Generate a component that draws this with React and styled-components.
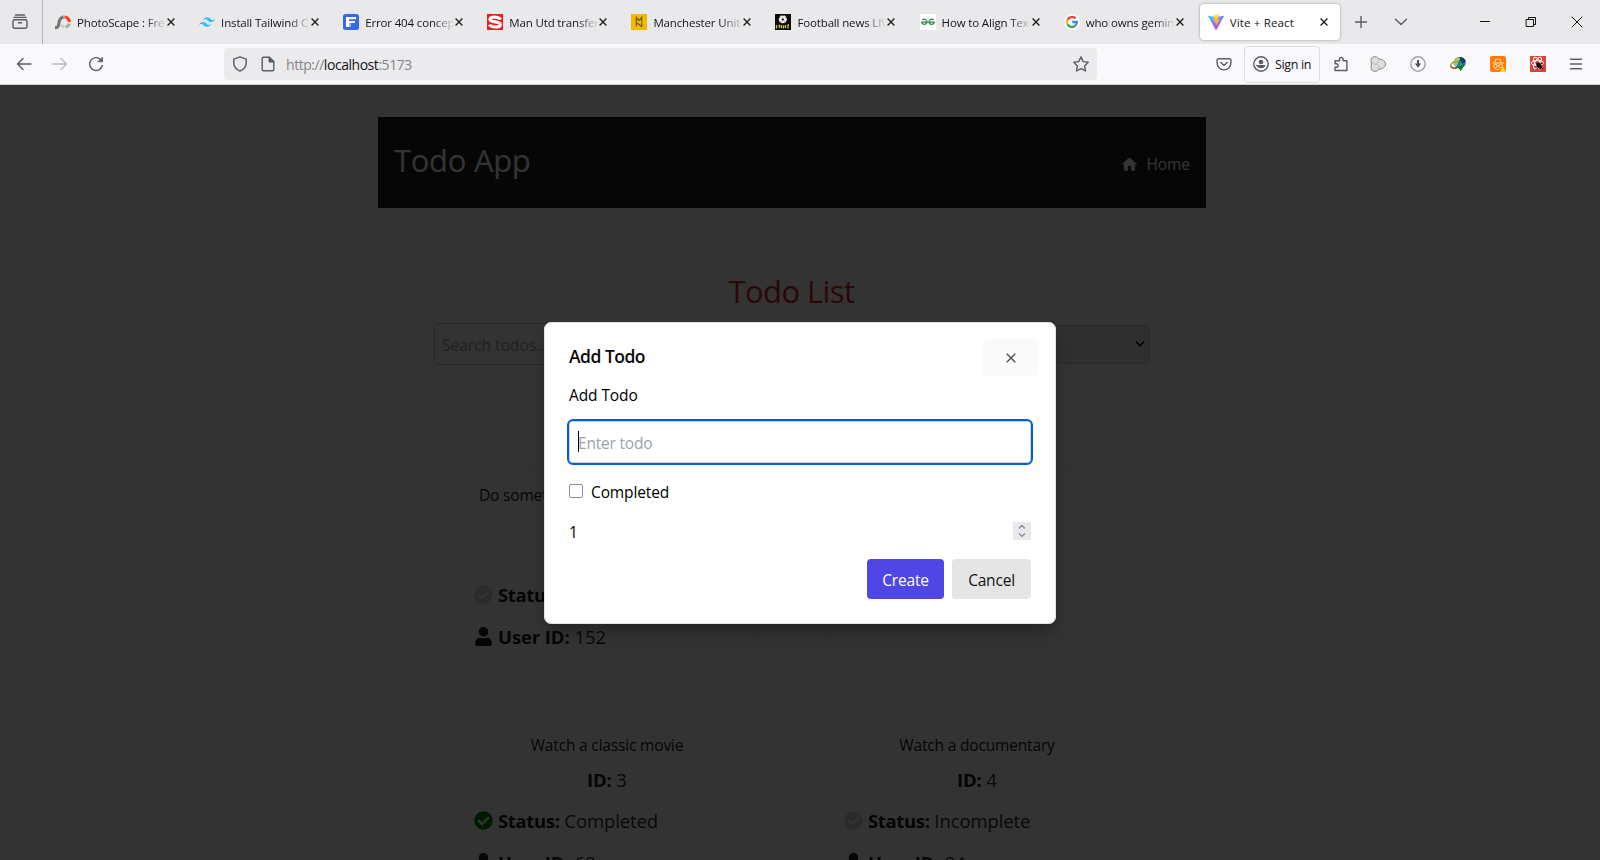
import React from "react";
import styled, { createGlobalStyle } from "styled-components";
import { FaUser, FaCheckCircle } from "react-icons/fa";
import { MdHome } from "react-icons/md";

const GlobalStyle = createGlobalStyle`
  * { box-sizing: border-box; }
  body {
    margin: 0;
    overflow: hidden;
    font-family: "Open Sans", "Noto Sans", sans-serif;
    font-size: 15.5px;
    color: #000;
  }
  svg { display: block; flex: none; }
  button, input { font: inherit; }
`;

const Window = styled.div`
  width: 1600px;
  height: 860px;
  display: flex;
  flex-direction: column;
  overflow: hidden;
`;

/* ---------- browser chrome ---------- */

const TabStrip = styled.div`
  height: 44px;
  flex: none;
  display: flex;
  background: #e9e9eb;
`;

const ViewButton = styled.div`
  width: 43px;
  flex: none;
  padding: 0 0 0 12px;
  display: flex;
  align-items: center;
  border-right: 1px solid #b3b3b5;
`;

const Tab = styled.div`
  width: ${(p) => (p.$active ? 140 : 144.1)}px;
  height: ${(p) => (p.$active ? 36 : 44)}px;
  margin: ${(p) => (p.$active ? "4px 0 0 4px" : "0")};
  padding-left: ${(p) => (p.$active ? 8 : 12)}px;
  flex: none;
  display: flex;
  align-items: center;
  background: ${(p) => (p.$active ? "#fff" : "transparent")};
  border-radius: 4px;
  box-shadow: ${(p) => (p.$active ? "0 0 3px rgba(0,0,0,.35)" : "none")};
`;

const TabTitle = styled.span`
  width: 88px;
  margin-left: 6px;
  overflow: hidden;
  white-space: nowrap;
  font-size: 11.5px;
  line-height: 18px;
  padding-top: 1px;
  letter-spacing: ${(p) => (p.$active ? 0.15 : -0.15)}px;
  color: #15141a;
  mask-image: ${(p) =>
    p.$active ? "none" : "linear-gradient(to right, #000 68px, transparent 90px)"};
`;

const TabClose = styled.span`
  margin-left: 2px;
`;

const TabActions = styled.div`
  display: flex;
  align-items: center;
  margin-left: 13px;
  gap: 24px;
`;

const WindowControls = styled.div`
  display: flex;
  align-items: center;
  gap: 30px;
  margin-left: auto;
  padding-right: 15px;
`;

const Toolbar = styled.div`
  height: 41px;
  flex: none;
  display: flex;
  align-items: center;
  background: #f9f9fb;
  border-bottom: 1px solid #cfcfd0;
`;

const NavButtons = styled.div`
  width: 224px;
  flex: none;
  padding-left: 16px;
  display: flex;
  gap: 20px;
`;

const UrlBar = styled.div`
  width: 873px;
  flex: none;
  height: 32px;
  padding: 0 8px;
  display: flex;
  align-items: center;
  background: #ebebed;
  border-radius: 4px;
`;

const UrlText = styled.span`
  flex: 1;
  margin-left: 10px;
  font-size: 14px;
  line-height: 20px;
  padding-top: 2px;
  letter-spacing: -0.46px;
  color: #858587;
  b { font-weight: 400; color: #15141a; }
`;

const UrlIcon = styled.span`
  margin-left: ${(p) => p.$gap || 0}px;
`;

const ToolItems = styled.div`
  flex: 1;
  padding-left: 107px;
  display: flex;
  align-items: center;
`;

const ToolCell = styled.span`
  width: ${(p) => p.$w || 40}px;
  flex: none;
  display: flex;
  justify-content: center;
`;

const SignIn = styled.div`
  width: 76px;
  flex: none;
  height: 37px;
  margin: 0 4px 0 0;
  display: flex;
  align-items: center;
  gap: 6px;
  padding-left: 8px;
  border: 1px solid #dedee1;
  border-radius: 4px;
  font-size: 12.5px;
  letter-spacing: -0.36px;
  color: #15141a;
  white-space: nowrap;
`;

/* ---------- page ---------- */

const Viewport = styled.div`
  flex: 1;
  position: relative;
  overflow: hidden;
  background: #fff;
`;

const Page = styled.div`
  width: 828px;
  margin-left: 378px;
  padding-top: 32px;
`;

const Header = styled.header`
  height: 91px;
  padding: 0 16px;
  display: flex;
  justify-content: space-between;
  align-items: center;
  color: #fff;
  background: repeating-linear-gradient(45deg, #161616 0, #161616 1.4px, #272727 1.4px, #272727 2.8px);
`;

const Brand = styled.h1`
  margin: 0 0 6px;
  font-size: 31px;
  line-height: 40px;
  font-weight: 400;
  letter-spacing: -0.3px;
`;

const HomeLink = styled.a`
  display: flex;
  align-items: center;
  gap: 7px;
  line-height: 24px;
  margin-top: 3px;
  letter-spacing: -0.05px;
`;

const Panel = styled.main`
  width: 768px;
  height: 700px;
  margin: 36px 0 0 31px;
  padding: 24px;
  border: 1px solid #f8f8f8;
  border-radius: 8px;
`;

const PanelTitle = styled.h2`
  margin: 2px 0 12px;
  text-align: center;
  font-size: 31px;
  line-height: 40px;
  font-weight: 400;
  letter-spacing: -0.6px;
  padding-right: 3px;
  color: #dc2626;
`;

const Filters = styled.div`
  display: flex;
  justify-content: space-between;
  align-items: center;
  padding-right: 2px;
`;

const SearchBox = styled.div`
  width: 300px;
  height: 42px;
  padding: 0 7px;
  line-height: 43px;
  border: 1px solid #c8c8c8;
  border-radius: 4px;
  letter-spacing: 0;
  color: #9ca3af;
`;

const SelectBox = styled.div`
  width: 180px;
  height: 39px;
  padding-right: 4px;
  display: flex;
  justify-content: flex-end;
  align-items: center;
  background: #e9e9ed;
  border: 1px solid #d0d0d0;
  border-radius: 4px;
`;

const Grid = styled.div`
  display: grid;
  grid-template-columns: 300px 300px;
  column-gap: 70px;
  row-gap: 40px;
  padding: 100px 0 0 23px;
`;

const Card = styled.article`
  height: 210px;
  padding: 17px 16px;
  border: 1px solid #f2f2f2;
  border-radius: 8px;
`;

const CardTitle = styled.h3`
  margin: 0 0 9px;
  text-align: center;
  font-size: 15.5px;
  line-height: 24px;
  font-weight: 400;
  letter-spacing: -0.17px;
  color: #1a1a1a;
`;

const CardId = styled.p`
  margin: 0 0 13px;
  text-align: center;
  font-size: 18.5px;
  line-height: 28px;
  color: #303030;
  b { color: #1a1a1a; letter-spacing: -0.2px; }
`;

const CardRow = styled.p`
  margin: 0 0 14px;
  display: flex;
  align-items: center;
  gap: 5px;
  font-size: 18.5px;
  line-height: 28px;
  letter-spacing: ${(p) => (p.$icon ? -0.1 : 0)}px;
  color: #303030;
  svg { width: 19px; height: 19px; margin-top: -1px; color: ${(p) => p.$icon || "#1a1a1a"}; }
  b { color: #1a1a1a; letter-spacing: ${(p) => (p.$icon ? -0.35 : -0.1)}px; }
`;

/* ---------- dialog ---------- */

const Overlay = styled.div`
  position: absolute;
  inset: 0;
  display: flex;
  align-items: center;
  justify-content: center;
  background: rgba(0, 0, 0, 0.8);
`;

const Dialog = styled.section`
  width: 512px;
  height: 302px;
  padding: 16px 24px 24px;
  background: #fff;
  border: 1px solid #e4e4e7;
  border-radius: 7px;
  box-shadow: 0 10px 15px -3px rgba(0, 0, 0, 0.3);
`;

const DialogHead = styled.div`
  height: 37px;
  display: flex;
  justify-content: space-between;
  margin-right: -8px;
`;

const DialogTitle = styled.h2`
  margin: 3px 0 0;
  font-size: 17.5px;
  line-height: 28px;
  font-weight: 600;
  letter-spacing: -0.5px;
  color: #09090b;
`;

const CloseButton = styled.button`
  width: 56px;
  flex: none;
  height: 37px;
  padding: 1px 0 0;
  display: flex;
  align-items: center;
  justify-content: center;
  border: 0;
  border-radius: 4px;
  background: #fafafa;
`;

const Label = styled.div`
  margin-top: 6px;
  padding-top: 1px;
  height: 24px;
  line-height: 24px;
  letter-spacing: -0.1px;
`;

const Field = styled.div`
  height: 46px;
  margin: 13px -2px 0;
  padding: 2px 8px 0;
  display: flex;
  align-items: center;
  border: 2px solid #0060df;
  border-radius: 6px;
  box-shadow: inset 0 0 0 1px #cfcfcf;
  letter-spacing: -0.2px;
  color: #9ca3af;
`;

const Caret = styled.span`
  width: 1px;
  height: 21px;
  margin: 0 -1px 2px 1px;
  background: #000;
`;

const CheckRow = styled.div`
  display: flex;
  align-items: center;
  gap: 8px;
  margin-top: 15px;
  height: 24px;
`;

const CheckBox = styled.span`
  width: 14px;
  height: 14px;
  margin-top: -2px;
  border: 1px solid #8f8f9d;
  border-radius: 2px;
`;

const CheckLabel = styled.span`
  padding-top: 1px;
  letter-spacing: -0.12px;
`;

const NumberRow = styled.div`
  display: flex;
  justify-content: space-between;
  align-items: center;
  height: 24px;
  margin-top: 15px;
`;

const NumberValue = styled.span`
  padding-top: 3px;
`;

const Stepper = styled.span`
  width: 18px;
  height: 18px;
  display: flex;
  align-items: center;
  justify-content: center;
  background: #e9e9ed;
`;

const Actions = styled.div`
  display: flex;
  justify-content: flex-end;
  gap: 8px;
  margin-top: 16px;
`;

const ActionButton = styled.button`
  width: ${(p) => (p.$primary ? 77 : 79)}px;
  height: 40px;
  padding: 2px 0 0;
  border: 0;
  border-radius: 4px;
  color: ${(p) => (p.$primary ? "#fff" : "#111")};
  background: ${(p) => (p.$primary ? "#4f46e5" : "#e5e5e5")};
  letter-spacing: -0.2px;
`;

/* ---------- icons ---------- */

const Line = ({ size = 16, color = "#5b5b66", w = 1.4, children }) => (
  <svg width={size} height={size} viewBox="0 0 16 16" fill="none" stroke={color} strokeWidth={w} strokeLinecap="round" strokeLinejoin="round">
    {children}
  </svg>
);

const Cross = ({ size = 8, color = "#222", w = 1.4 }) => (
  <svg width={size} height={size} viewBox="0 0 8 8" stroke={color} strokeWidth={w}>
    <path d="M.6.6 7.4 7.4M7.4.6.6 7.4" />
  </svg>
);

const favicons = {
  photoscape: (
    <svg width="16" height="16" viewBox="0 0 16 16" fill="none">
      <path d="M0 13.600c3.500.2 3.500-2 4-5C4.600 5.500 5.500 3.600 8.600 2.800" stroke="#777" strokeWidth="3.200" />
      <path d="M9.500 3a5.200 5.200 0 0 1 4.800 5" stroke="#ff3d18" strokeWidth="3.200" />
      <path d="M14.300 9.500a5 5 0 0 1-3.500 3.600" stroke="#aaa" strokeWidth="3" />
      <path d="M9.500 13.300a5 5 0 0 1-3-2.500" stroke="#c9c9c9" strokeWidth="2.600" />
    </svg>
  ),
  tailwind: (
    <svg width="16" height="16" viewBox="0 0 16 16" fill="#38bdf8">
      <path d="M4 6.400C4.530 4.270 5.870 3.200 8 3.200c3.200 0 3.600 2.400 5.200 2.800 1.070.27 2-.13 2.800-1.200-.53 2.130-1.870 3.200-4 3.200-3.200 0-3.600-2.400-5.200-2.800-1.070-.27-2 .13-2.800 1.200zM0 11.200C.53 9.070 1.870 8 4 8c3.200 0 3.600 2.400 5.200 2.800 1.070.27 2-.13 2.800-1.200-.53 2.130-1.870 3.200-4 3.200-3.200 0-3.600-2.400-5.200-2.800-1.070-.27-2 .13-2.800 1.200z" />
    </svg>
  ),
  freepik: (
    <svg width="16" height="16" viewBox="0 0 16 16">
      <rect width="16" height="16" rx="2.500" fill="#336aea" />
      <path d="M3 3h3v10H3zM6 3h7v2.200H6zM6 7h6v2H6z" fill="#fff" />
      <path d="M6 9h2v4H6z" fill="#9bb6f5" />
    </svg>
  ),
  sun: (
    <svg width="16" height="16" viewBox="0 0 16 16">
      <rect width="16" height="16" fill="#eb1e23" />
      <path d="M13.400 5.600C12.600 2.800 3 1.700 3 5.200c0 3.500 10.300 2 10.300 5.300 0 3.600-9.500 3-10.800.2" fill="none" stroke="#fff" strokeWidth="3.200" />
    </svg>
  ),
  men: (
    <svg width="16" height="16" viewBox="0 0 16 16">
      <rect width="16" height="16" fill="#f1b900" />
      <path d="M5.300 7.500V3.500l2.700 3 2.700-3v4M5.300 12.500v-4l5.400 4v-4" fill="none" stroke="#7a5f10" strokeWidth="1.300" />
    </svg>
  ),
  talksport: (
    <svg width="16" height="16" viewBox="0 0 16 16">
      <rect width="16" height="16" fill="#0b0b0b" />
      <circle cx="7.800" cy="5.300" r="4" fill="#eee" />
      <path d="m7.800 4.200 1.200.9-.4 1.400H7l-.4-1.400z" fill="#111" />
      <path d="M4.300 3.800l1-1M11.300 3.800l-1-1M5.300 8.600l.5-1M10.300 8.600l-.5-1M7.200 1.600h1.200" stroke="#111" />
      <path d="M1.500 11v3.500M3.500 11.500h1v2.500M6.500 11v3M8.500 11.500v3M10.500 11v3M12.500 11h1.500M13 11v3.500" stroke="#d6cf13" strokeWidth="1.300" />
    </svg>
  ),
  geeks: (
    <svg width="16" height="16" viewBox="0 0 16 16">
      <rect width="16" height="16" fill="#fff" />
      <path d="M2.200 5.800C4.500 4.500 7 5.600 6.800 8c-.2 3-4.600 3-5 .2h12.400c-.4 2.800-4.800 2.800-5-.2-.2-2.400 2.300-3.500 4.600-2.200" fill="none" stroke="#2f8d46" strokeWidth="1.300" />
    </svg>
  ),
  google: (
    <svg width="16" height="16" viewBox="0 0 16 16">
      <circle cx="8" cy="8" r="8" fill="#fff" />
      <g fill="none" strokeWidth="2.300">
        <path d="M11.600 4.500A5 5 0 0 0 3.500 5.800" stroke="#ea4335" />
        <path d="M3.500 5.800a5 5 0 0 0 0 4.400" stroke="#fbbc05" />
        <path d="M3.500 10.200a5 5 0 0 0 7.800 1.500" stroke="#34a853" />
        <path d="M11.300 11.700A5 5 0 0 0 12.900 8H8.200" stroke="#4285f4" />
      </g>
    </svg>
  ),
  vite: (
    <svg width="16" height="16" viewBox="0 0 16 16">
      <defs>
        <linearGradient id="va" x1="0" y1="0" x2="0.600" y2="1">
          <stop stopColor="#41d1ff" />
          <stop offset="1" stopColor="#bd34fe" />
        </linearGradient>
        <linearGradient id="vb" x1="0" y1="0" x2="0" y2="1">
          <stop stopColor="#ffea83" />
          <stop offset=".3" stopColor="#ffc72a" />
          <stop offset="1" stopColor="#ffa800" />
        </linearGradient>
      </defs>
      <path d="M15.900 2.400 8.400 15.700c-.2.300-.6.300-.7 0L.1 2.400c-.2-.3.100-.7.400-.600L8 3.100l7.400-1.300c.4-.1.700.3.500.600z" fill="url(#va)" />
      <path d="m11.500 0-5.600 1.100-.5 6 1.900-.3-.5 2.400 1.300-.3-.5 3.300 4.200-6.700-2.100.3z" fill="url(#vb)" />
    </svg>
  ),
};

const tabs = [
  { icon: "photoscape", title: "PhotoScape : Free" },
  { icon: "tailwind", title: "Install Tailwind CSS" },
  { icon: "freepik", title: "Error 404 concept" },
  { icon: "sun", title: "Man Utd transfer" },
  { icon: "men", title: "Manchester United" },
  { icon: "talksport", title: "Football news LIVE" },
  { icon: "geeks", title: "How to Align Text" },
  { icon: "google", title: "who owns gemini" },
  { icon: "vite", title: "Vite + React", active: true },
];

const todos = [
  { title: "Do something nice for someone you care about", id: 1, done: false, user: 152 },
  { title: "Memorize a poem", id: 2, done: true, user: 13 },
  { title: "Watch a classic movie", id: 3, done: true, user: 68 },
  { title: "Watch a documentary", id: 4, done: false, user: 84 },
];

function BrowserChrome() {
  return (
    <>
      <TabStrip>
        <ViewButton>
          <Line><path d="M3.500 1h9M2 3.400h12M2.600 5.800h10.800c.8 0 1.600.6 1.600 1.600v5.200c0 1-.7 1.700-1.700 1.700H2.700c-1 0-1.700-.7-1.700-1.700V7.400c0-1 .8-1.600 1.600-1.600zM6.500 8.800h3" /></Line>
        </ViewButton>
        {tabs.map((t) => (
          <Tab key={t.title} $active={t.active}>
            {favicons[t.icon]}
            <TabTitle $active={t.active}>{t.title}</TabTitle>
            <TabClose><Cross /></TabClose>
          </Tab>
        ))}
        <TabActions>
          <Line><path d="M8 2.500v11M2.500 8h11" /></Line>
          <Line><path d="m2.500 5.300 5.500 5.200 5.500-5.200" /></Line>
        </TabActions>
        <WindowControls>
          <Line color="#111" w={1}><path d="M3 7.500h10" strokeLinecap="butt" /></Line>
          <Line color="#111" w={1}><path d="M3.500 5.500h7v7h-7zM5.500 5.500v-2h7v7h-2" strokeLinejoin="miter" /></Line>
          <Line color="#111" w={1}><path d="m3 3 10 10M13 3 3 13" /></Line>
        </WindowControls>
      </TabStrip>
      <Toolbar>
        <NavButtons>
          <Line><path d="M15 8H1.500M7 2.500 1.500 8 7 13.500" /></Line>
          <Line color="#b9b9be"><path d="M1 8h13.500M9 2.500 14.500 8 9 13.500" /></Line>
          <Line><path d="M14.300 9.500A6.400 6.400 0 1 1 12.600 3.500" /><path d="M14.500 1.500v4.300h-4.300z" fill="#5b5b66" strokeWidth=".8" /></Line>
        </NavButtons>
        <UrlBar>
          <Line><path d="M8 .8 1.800 3.200v3.600c0 4 2.400 6.800 6.200 8.400 3.800-1.600 6.200-4.400 6.200-8.400V3.200z" /></Line>
          <UrlIcon $gap={12}>
            <Line><path d="M3.500 1.200h5.700l4.600 4.500v7.800c0 .8-.5 1.300-1.300 1.300h-9c-.8 0-1.300-.5-1.300-1.300v-11c0-.8.5-1.300 1.300-1.300z" /><path d="M9.200 1.200v4.500h4.600z" fill="#5b5b66" /></Line>
          </UrlIcon>
          <UrlText>http://<b>localhost</b>:5173</UrlText>
          <Line><path d="m8 .9 2.200 4.700 5 .7-3.600 3.600.9 5.100L8 12.600 3.500 15l.9-5.100L.8 6.300l5-.7z" /></Line>
        </UrlBar>
        <ToolItems>
          <ToolCell>
            <Line><path d="M2.500 2.700h11c.8 0 1.400.6 1.400 1.400V7A6.900 6.900 0 0 1 1.100 7V4.100c0-.8.6-1.400 1.400-1.400zM4.800 6.500 8 9.600l3.200-3.100" /></Line>
          </ToolCell>
          <SignIn>
            <Line><circle cx="8" cy="8" r="7.200" /><circle cx="8" cy="6" r="2.300" fill="#5b5b66" stroke="none" /><path d="M3.800 9.600h8.400a5 5 0 0 1-8.400 0z" fill="#5b5b66" strokeWidth="1" /></Line>
            Sign in
          </SignIn>
          <ToolCell $w={34}>
            <Line><path d="M2 7V4.700h4.500V3.200a1.800 1.800 0 0 1 3.600 0v1.500h3.800v9.800H2v-3.200h1.300a1.800 1.800 0 0 0 0-3.600H2" /></Line>
          </ToolCell>
          <ToolCell>
            <svg width="16" height="16" viewBox="0 0 16 16" fill="#dedede" stroke="#858585" strokeWidth="1">
              <path d="M1 4.500C.6 2 3 .5 5.200.7c2 0 3 1 3.500 2.300 3.300 0 6.800 2 6.800 5s-3 5.300-6.500 5c-.7 1.600-2 2.300-4 2.300C2.500 15.300.8 13.500 1 11.500 1.500 9.500 1.500 6.500 1 4.500z" />
              <path d="M8.700 3C9 5 8 7.800 5 8.200c3 .3 4.300 2.500 4 4.800M5 8.200C3 8 2 6.500 1 4.500" stroke="#bdbdbd" fill="none" />
            </svg>
          </ToolCell>
          <ToolCell>
            <svg width="16" height="16" viewBox="0 0 16 16" fill="none">
              <circle cx="8" cy="8" r="7.200" stroke="#a4a4a8" strokeWidth="1.500" />
              <path d="M8 4v4" stroke="#4d4d55" strokeWidth="2" />
              <path d="M4.900 7.600h6.200L8 11.800z" fill="#4d4d55" />
            </svg>
          </ToolCell>
          <ToolCell>
            <svg width="16" height="16" viewBox="0 0 16 16">
              <ellipse cx="9.800" cy="6.500" rx="6" ry="5.500" fill="#2276bd" />
              <path d="M9 1.200c3-.5 5.800 1.300 6.700 4L12.500 8 9 6z" fill="#153f74" />
              <path d="M5.500 2.700c2-1.800 4.500-1.300 4.500.2S7.500 6.500 7.300 8.800 3.800 9.500 3.800 7z" fill="#9ad06b" />
              <ellipse cx="6" cy="8.800" rx="5.600" ry="3" fill="none" stroke="#59a62c" strokeWidth="1.300" transform="rotate(-15 6 8.800)" />
              <path d="M.6 9.200C1.800 6 4.500 4.600 7.500 4.800" stroke="#e0b22b" strokeWidth="1.300" fill="none" />
              <path d="M1 10.500c1.500 2 4 2 6 1.300" stroke="#c2482a" strokeWidth="1.300" fill="none" />
              <path d="M6.500 11.500 14.500 8 13 11.500l-2.500 3.700-1-2.200z" fill="#087b18" />
            </svg>
          </ToolCell>
          <ToolCell>
            <svg width="16" height="16" viewBox="0 0 16 16" fill="none">
              <rect width="16" height="16" rx="2.500" fill="#ff7a00" />
              <path d="M2.300 7h11.400M4.800 6.500 5.600 3.300h4.800l.8 3.200" stroke="#ffe4c7" />
              <circle cx="5.300" cy="10" r="1.800" stroke="#ffe4c7" strokeWidth=".9" />
              <circle cx="10.700" cy="10" r="1.800" stroke="#ffe4c7" strokeWidth=".9" />
              <path d="M7 9.800h2M4.500 12.500c1.500 1.200 3.500 1.300 5 .5" stroke="#ffe4c7" strokeWidth=".9" />
              <path d="m13 10.500 3 5.500h-6z" fill="#ffe21c" />
            </svg>
          </ToolCell>
          <ToolCell>
            <svg width="16" height="16" viewBox="0 0 16 16" fill="none">
              <rect width="16" height="16" fill="#d9453a" />
              <g stroke="#fff" strokeWidth="1">
                <ellipse cx="7.500" cy="7" rx="6.300" ry="2.500" />
                <ellipse cx="7.500" cy="7" rx="6.300" ry="2.500" transform="rotate(60 7.500 7)" />
                <ellipse cx="7.500" cy="7" rx="6.300" ry="2.500" transform="rotate(120 7.500 7)" />
              </g>
              <ellipse cx="9.300" cy="9.800" rx="2.200" ry="3.600" fill="#16100f" transform="rotate(-40 9.300 9.800)" />
              <path d="m6.500 9.500 1 4M9.500 7l4 1M7 7.500l-1.500-1M11.500 12l2 1" stroke="#16100f" strokeWidth=".8" />
            </svg>
          </ToolCell>
          <ToolCell $w={36}>
            <Line><path d="M2.500 3.300h11M2.500 8h11M2.500 12.700h11" /></Line>
          </ToolCell>
        </ToolItems>
      </Toolbar>
    </>
  );
}

function TodoCard({ todo }) {
  return (
    <Card>
      <CardTitle>{todo.title}</CardTitle>
      <CardId><b>ID:</b> {todo.id}</CardId>
      <CardRow $icon={todo.done ? "#008000" : "#d4d4d4"}>
        <FaCheckCircle />
        <span><b>Status:</b> {todo.done ? "Completed" : "Incomplete"}</span>
      </CardRow>
      <CardRow>
        <FaUser />
        <span><b>User ID:</b> {todo.user}</span>
      </CardRow>
    </Card>
  );
}

function AddTodoDialog() {
  return (
    <Dialog role="dialog">
      <DialogHead>
        <DialogTitle>Add Todo</DialogTitle>
        <CloseButton aria-label="Close"><Cross size={10} color="#4b4b50" w={1.1} /></CloseButton>
      </DialogHead>
      <Label>Add Todo</Label>
      <Field><Caret />Enter todo</Field>
      <CheckRow><CheckBox /><CheckLabel>Completed</CheckLabel></CheckRow>
      <NumberRow>
        <NumberValue>1</NumberValue>
        <Stepper>
          <svg width="8" height="14" viewBox="0 0 8 14" fill="none" stroke="#8f8f9d" strokeWidth="1.500">
            <path d="m1 4.500 3-3 3 3M1 9.500l3 3 3-3" />
          </svg>
        </Stepper>
      </NumberRow>
      <Actions>
        <ActionButton $primary>Create</ActionButton>
        <ActionButton>Cancel</ActionButton>
      </Actions>
    </Dialog>
  );
}

export default function App() {
  return (
    <Window>
      <GlobalStyle />
      <BrowserChrome />
      <Viewport>
        <Page>
          <Header>
            <Brand>Todo App</Brand>
            <HomeLink><MdHome size={19} />Home</HomeLink>
          </Header>
          <Panel>
            <PanelTitle>Todo List</PanelTitle>
            <Filters>
              <SearchBox>Search todos...</SearchBox>
              <SelectBox>
                <svg width="10" height="8" viewBox="0 0 10 8" fill="none" stroke="#000" strokeWidth="1.600">
                  <path d="m1 1.800 4 4 4-4" />
                </svg>
              </SelectBox>
            </Filters>
            <Grid>
              {todos.map((t) => <TodoCard key={t.id} todo={t} />)}
            </Grid>
          </Panel>
        </Page>
        <Overlay><AddTodoDialog /></Overlay>
      </Viewport>
    </Window>
  );
}
